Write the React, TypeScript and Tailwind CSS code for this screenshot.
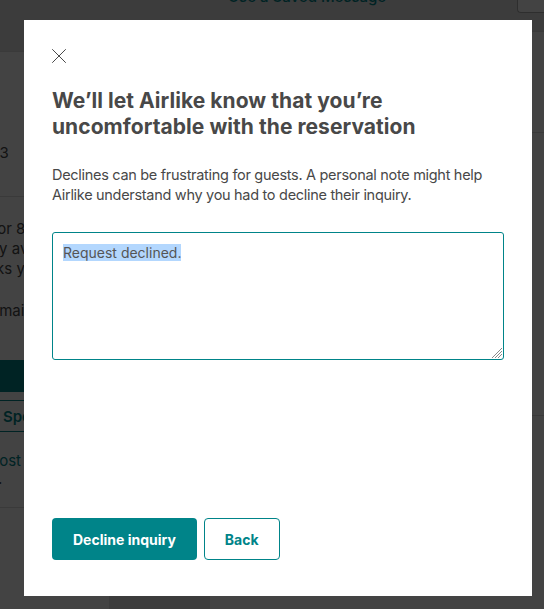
import React from "react"

const font = "font-['Inter','Liberation_Sans',sans-serif]"

function Backdrop() {
  return (
    <div className="flex h-full w-full bg-white text-[#484848]">
      <div className="flex w-[110px] shrink-0 flex-col border-r border-[#e4e4e4]">
        <div className="h-[52px] shrink-0 border-b border-[#dcdcdc] bg-[#e2e2e2]" />
        <div className="h-[145px] shrink-0 overflow-hidden border-b border-[#dcdcdc] pt-[90px] text-[15px]">
          <div className="-ml-[76px] whitespace-nowrap">Sep 20 – 23</div>
        </div>
        <div className="flex h-[163px] shrink-0 flex-col overflow-hidden pt-[22px] text-[15px] leading-[20px]">
          <div className="-ml-[70px] whitespace-nowrap">Request for 8 nights</div>
          <div className="-ml-[25px] whitespace-nowrap">Only available</div>
          <div className="-ml-[35px] whitespace-nowrap">thanks you</div>
          <div className="-ml-[19px] mt-[22px] whitespace-nowrap">Remaining</div>
        </div>
        <div className="h-[32px] shrink-0 bg-[#008489]" />
        <div className="mt-[8px] h-[32px] shrink-0 overflow-hidden border-y border-[#008489] pl-[3px] pt-[5px] text-[15px] font-semibold text-[#008489]">
          Special offer
        </div>
        <div className="flex h-[76px] shrink-0 flex-col overflow-hidden border-b border-[#dcdcdc] pt-[20px] text-[15px] leading-[18px]">
          <div className="-ml-[12px] whitespace-nowrap text-[#008489]">Host Guarantee</div>
          <div className="-ml-[2px] whitespace-nowrap">.</div>
        </div>
      </div>
      <div className="w-[100px] shrink-0 border-r border-[#e4e4e4] bg-[#e2e2e2]" />
      <div className="relative flex min-w-0 flex-1 flex-col">
        <div className="flex h-[32px] shrink-0 items-start justify-between border-b border-[#dcdcdc] bg-[#e2e2e2] pl-[18px] pr-0">
          <div className="-mt-[14px] text-[15px] font-medium text-[#008489]">Use a Saved Message</div>
          <div className="-mt-[20px] h-[33px] w-[27px] rounded-l-[4px] border border-r-0 border-[#b0b0b0] bg-white" />
        </div>
        <div className="flex justify-end">
          <div className="w-[34px] overflow-hidden">
            <div className="border-b border-[#dcdcdc] pb-[30px] pt-[36px] text-[14px] leading-[17px]">
              <div className="-ml-[22px] whitespace-nowrap">2020</div>
              <div className="-ml-[20px] whitespace-nowrap">for bo</div>
            </div>
            <div className="border-b border-[#dcdcdc] pb-[48px] pt-[20px] text-[14px] leading-[17.8px]">
              {["the h", "Airb", "a bo", "I ha", "out", "fiend", "all.", "a fe", "y an", "that", "obe", "ome"].map((t) => (
                <div key={t} className="-ml-[20px] whitespace-nowrap">{t}</div>
              ))}
            </div>
          </div>
        </div>
      </div>
    </div>
  )
}

function ResizeGrip() {
  return (
    <svg width="11" height="11" viewBox="0 0 11 11" className="absolute bottom-[1px] right-[1px]">
      <g stroke="#8a8a8a" strokeWidth="1">
        <line x1="1" y1="11" x2="11" y2="1" />
        <line x1="4" y1="11" x2="11" y2="4" />
        <line x1="7" y1="11" x2="11" y2="7" />
      </g>
    </svg>
  )
}

export default function App() {
  return (
    <div className={`relative h-[609px] w-[544px] overflow-hidden ${font}`}>
      <Backdrop />
      <div className="absolute inset-0 bg-black/[0.737]" />

      <div className="absolute left-[24px] top-[20px] flex h-[576px] w-[508px] flex-col bg-white px-[28px] pb-[36px] pt-[29px] text-[#484848]">
        <button type="button" aria-label="Close" className="h-[14px] w-[14px]">
          <svg width="14" height="14" viewBox="0 0 14 14" className="block">
            <g stroke="#484848" strokeWidth="1" strokeLinecap="round">
              <line x1="0.5" y1="0.5" x2="13.5" y2="13.5" />
              <line x1="13.5" y1="0.5" x2="0.5" y2="13.5" />
            </g>
          </svg>
        </button>

        <h1 className="mt-[25px] text-[21px] font-bold leading-[26px] tracking-[0.05px]">
          We’ll let Airlike know that you’re
          <br />
          uncomfortable with the reservation
        </h1>

        <p className="mt-[25px] text-[14.5px] leading-[20px] tracking-[-0.3px]">
          Declines can be frustrating for guests. A personal note might help Airlike understand why you had to decline their inquiry.
        </p>

        <div className="relative mt-[27px] h-[128px] rounded-[3px] border border-[#008489] px-[10px] py-[10px] text-[14px] leading-[20px] text-[#555]">
          <span className="bg-[#b3d7fe]">Request declined.</span>
          <ResizeGrip />
        </div>

        <div className="mt-auto flex gap-[7px]">
          <button
            type="button"
            className="h-[42px] rounded-[4px] bg-[#008489] px-[21px] text-[14px] font-bold text-white"
          >
            Decline inquiry
          </button>
          <button
            type="button"
            className="h-[42px] rounded-[4px] border border-[#008489] bg-white px-[20px] text-[14px] font-bold text-[#008489]"
          >
            Back
          </button>
        </div>
      </div>
    </div>
  )
}
